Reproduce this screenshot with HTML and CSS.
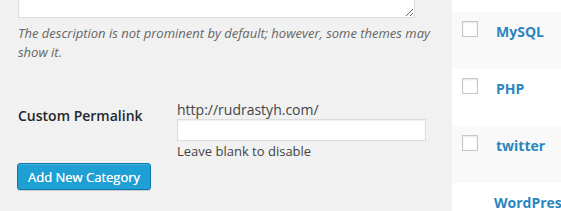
FILE: index.html
```html
<!DOCTYPE html>
<html lang="en">
  <head>
    <meta charset="UTF-8" />
    <title>Categories</title>
    <link rel="stylesheet" href="styles.css">
  </head>
  <body>
    <div class="wrap">
      <div class="col-left">
        <textarea class="desc-box"></textarea>
        <p class="hint">The description is not prominent by default; however, some themes may show it.</p>
        <div class="field">
          <label class="field-label">Custom Permalink</label>
          <div class="field-body">
            <div class="prefix">http://rudrastyh.com/</div>
            <input type="text" class="text-input" />
            <div class="note">Leave blank to disable</div>
          </div>
        </div>
        <button class="btn-primary">Add New Category</button>
      </div>
      <div class="col-right">
        <div class="row row-top"></div>
        <div class="row alt"><span class="check"></span><a href="#" class="name">MySQL</a></div>
        <div class="row"><span class="check"></span><a href="#" class="name">PHP</a></div>
        <div class="row alt"><span class="check"></span><a href="#" class="name">twitter</a></div>
        <div class="row no-check"><a href="#" class="name">WordPress</a></div>
      </div>
    </div>
  </body>
</html>
```

FILE: styles.css
```css
* {
  margin: 0px;
  padding: 0px;
  box-sizing: border-box;
}
body {
  background-color: #f1f1f1;
  font-family: "Open Sans", "Liberation Sans", sans-serif;
  color: #444;
  overflow: hidden;
}
.wrap {
  display: flex;
  height: 211px;
  overflow: hidden;
}
.col-left {
  width: 452px;
  flex-shrink: 0;
  padding-left: 18px;
}
.desc-box {
  display: block;
  width: 397px;
  height: 58px;
  margin-top: -40px;
  border: 1px solid #ddd;
  background-color: #fff;
  box-shadow: inset 0 1px 2px rgba(0, 0, 0, 0.07);
}
.hint {
  width: 412px;
  margin-top: 6px;
  font-size: 13px;
  line-height: 19px;
  font-style: italic;
  color: #666;
}
.field {
  display: flex;
  margin-top: 38px;
}
.field-label {
  width: 159px;
  padding-top: 6px;
  font-size: 14px;
  font-weight: 600;
  color: #23282d;
}
.prefix {
  font-size: 14px;
  line-height: 19px;
}
.text-input {
  display: block;
  width: 249px;
  height: 22px;
  border: 1px solid #ddd;
  background-color: #fff;
  box-shadow: inset 0 1px 2px rgba(0, 0, 0, 0.07);
}
.note {
  margin-top: 1px;
  font-size: 13px;
  line-height: 18px;
}
.btn-primary {
  display: block;
  margin-top: 3px;
  margin-left: -1px;
  width: 134px;
  height: 27px;
  border: 1px solid #0b79ad;
  border-radius: 3px;
  background-color: #1ea0d4;
  box-shadow: inset 0 1px 0 rgba(120, 200, 230, 0.5), 0 1px 0 rgba(0, 0, 0, 0.15);
  font-family: "Open Sans", "Liberation Sans", sans-serif;
  font-size: 13px;
  color: #fff;
  text-shadow: 0 0 0.4px #fff;
  cursor: pointer;
}
.col-right {
  flex: 1;
  min-width: 0;
  background-color: #fff;
  overflow: hidden;
}
.row {
  display: flex;
  align-items: flex-start;
  height: 57px;
  padding: 9px 0 0 10px;
  background-color: #fff;
}
.row-top {
  height: 12px;
  padding: 0;
}
.alt {
  background-color: #f9f9f9;
}
.check {
  flex-shrink: 0;
  width: 16px;
  height: 16px;
  border: 1px solid #c3c6ca;
  background-color: #fff;
  box-shadow: inset 0 1px 2px rgba(0, 0, 0, 0.1);
}
.name {
  margin-left: 18px;
  margin-top: 1px;
  font-size: 14px;
  font-weight: 700;
  color: #2a86bf;
  text-decoration: none;
  white-space: nowrap;
}
.no-check .name {
  margin-left: 32px;
}
```
